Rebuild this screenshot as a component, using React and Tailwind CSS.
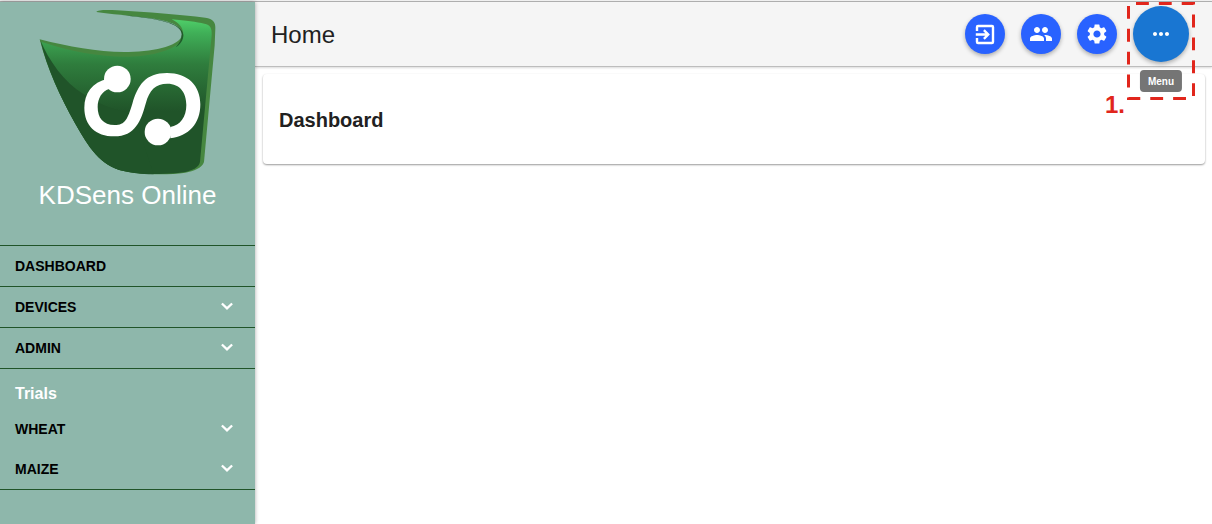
import React from 'react';
import { MdMoreHoriz, MdPeople, MdSettings } from 'react-icons/md';

const mainLinks = [
    { label: 'Dashboard', expandable: false },
    { label: 'Devices', expandable: true },
    { label: 'Admin', expandable: true },
];

const trialLinks = ['Wheat', 'Maize'];

const actions = [
    { label: 'Sign out', icon: ExitIcon },
    { label: 'Users', icon: MdPeople },
    { label: 'Settings', icon: MdSettings },
];

function ExitIcon({ className }) {
    return (
        <svg viewBox="0 0 24 24" className={className} fill="none" stroke="currentColor" strokeWidth="2.4" aria-hidden="true">
            <path d="M4 9V5a1 1 0 0 1 1-1h14a1 1 0 0 1 1 1v15a1 1 0 0 1-1 1H5a1 1 0 0 1-1-1v-4" />
            <path d="M2.8 12.5h12.4M10.9 8.2l4.3 4.3l-4.3 4.3" />
        </svg>
    );
}

function ChevronIcon({ className }) {
    return (
        <svg viewBox="0 0 24 24" className={className} fill="none" stroke="currentColor" strokeWidth="2.3" aria-hidden="true">
            <path d="M6.9 8.5L12 13.4L17.1 8.5" />
        </svg>
    );
}

function Logo() {
    return (
        <svg viewBox="53 20 540 510" className="h-[170px] w-[180px]" aria-hidden="true">
            <defs>
                <linearGradient id="leaf" x1="0" y1="50" x2="0" y2="520" gradientUnits="userSpaceOnUse">
                    <stop offset="0" stopColor="#52d46c" />
                    <stop offset="0.1" stopColor="#40b058" />
                    <stop offset="0.3" stopColor="#2f7d3d" />
                    <stop offset="0.6" stopColor="#205429" />
                    <stop offset="1" stopColor="#205429" />
                </linearGradient>
            </defs>
            {/* Rim */}
            <path
                d="M228 35C232 28 260 29 290 30C380 35 480 43 555 52C578 55 586 66 585 84L583 135L551 485C545 504 520 512 495 517C440 525 360 523 310 512C240 497 205 440 165 370C120 290 80 205 58 117C150 140 240 157 325 155C410 153 482 135 485 102C486 72 440 60 380 52C330 46 270 41 228 35Z"
                fill="#468740"
            />
            {/* Face */}
            <path
                d="M62 124C140 150 230 170 325 169C410 168 489 140 489 104C489 82 477 68 454 57C495 61 530 65 552 70C570 74 575 83 574 104L539 485C536 502 515 511 490 516C440 524 360 522 310 512C240 497 205 440 165 370C120 290 82 205 62 124Z"
                fill="url(#leaf)"
            />
            {/* Shaded edges */}
            <path
                d="M60 120C85 180 130 245 190 282C230 310 280 330 340 340L400 522C360 522 330 517 310 512C240 497 205 440 165 370C120 290 80 205 60 120Z"
                fill="#205429"
            />
            <path
                d="M300 44C380 50 489 62 489 104C489 120 480 132 466 141C478 128 484 116 484 102C484 72 420 58 360 51Z"
                fill="#1f5a2a"
            />
            {/* Sensor mark */}
            <path
                d="M262 235C215 245 192 280 192 322C192 375 225 408 282 408C345 408 362 360 376 310C388 268 405 250 441 250C480 250 498 278 498 314C498 350 480 375 450 380L450 414C505 408 540 370 540 312C540 255 502 218 440 218C375 218 352 255 336 310C322 355 315 374 283 374C248 374 232 352 232 320C232 295 245 272 266 266Z"
                fill="#fff"
            />
            <circle cx="291" cy="236" r="40" fill="#fff" />
            <circle cx="413" cy="395" r="40" fill="#fff" />
        </svg>
    );
}

function ExpandButton({ label }) {
    return (
        <button
            type="button"
            aria-expanded="false"
            className="flex h-10 w-full items-center justify-between pl-[15px] pr-4 uppercase"
        >
            {label}
            <ChevronIcon className="size-6 text-white" />
        </button>
    );
}

function Sidebar() {
    return (
        <aside className="z-10 w-[255px] shrink-0 bg-[#8eb7ab] shadow-[0_0_4px_rgba(0,0,0,0.35)]">
            <div className="flex h-[243px] flex-col items-center pt-[5px]">
                <Logo />
                <div className="text-[26px] leading-9 text-white">KDSens Online</div>
            </div>

            <nav className="border-b border-[#205429] text-sm font-bold text-black">
                {mainLinks.map((link) => (
                    <div key={link.label} className="border-t border-[#205429]">
                        {link.expandable ? (
                            <ExpandButton label={link.label} />
                        ) : (
                            <a href="#dashboard" className="flex h-10 items-center pl-[15px] uppercase">
                                {link.label}
                            </a>
                        )}
                    </div>
                ))}

                <div className="border-t border-[#205429]">
                    <h2 className="flex h-10 items-center pl-[15px] pt-2.5 text-base text-white">Trials</h2>
                    {trialLinks.map((label) => (
                        <ExpandButton key={label} label={label} />
                    ))}
                </div>
            </nav>
        </aside>
    );
}

function MenuButton() {
    return (
        <div className="relative z-20">
            <button
                type="button"
                aria-label="Menu"
                className="flex size-14 items-center justify-center rounded-full bg-[#1976d2] text-white shadow-[0_2px_4px_rgba(0,0,0,0.3)]"
            >
                <MdMoreHoriz className="size-6" />
            </button>
            <div
                role="tooltip"
                className="absolute left-1/2 top-full mt-2 -translate-x-1/2 rounded bg-[#757575] px-2 pt-[5px] pb-[3px] text-[10px] leading-[14px] font-bold text-white"
            >
                Menu
            </div>

            {/* Step marker */}
            <svg viewBox="0 0 68 98" className="pointer-events-none absolute -left-1.5 -top-1 h-[98px] w-[68px] max-w-none" aria-hidden="true">
                <path
                    d="M9 1.5H66.5V96.5H1.5V1.5H9"
                    fill="none"
                    stroke="#e1261c"
                    strokeWidth="3"
                    strokeDasharray="12.86 10"
                />
            </svg>
            <span className="absolute -left-7 top-[85px] text-2xl leading-7 font-bold text-[#e1261c]">1.</span>
        </div>
    );
}

export default function App() {
    return (
        <div className="flex min-h-screen flex-col bg-white font-['Liberation_Sans',Arial,sans-serif] text-[#212121]">
            <div className="h-0.5 shrink-0 border-b border-[#b0b0b0] bg-[#f0f0f0]" />

            <div className="flex grow">
                <Sidebar />

                <div className="min-w-0 grow">
                    <header className="flex h-[65px] items-center justify-between border-b border-[#bdbdbd] bg-[#f5f5f5] pl-4 pr-[23px] shadow-[0_1px_2px_rgba(0,0,0,0.15)]">
                        <h1 className="pt-0.5 text-2xl">Home</h1>
                        <div className="flex items-center gap-4">
                            {actions.map(({ label, icon: Icon }) => (
                                <button
                                    key={label}
                                    type="button"
                                    aria-label={label}
                                    className="flex size-10 items-center justify-center rounded-full bg-[#2962ff] text-white shadow-[0_2px_4px_rgba(0,0,0,0.3)]"
                                >
                                    <Icon className="size-6" />
                                </button>
                            ))}
                            <MenuButton />
                        </div>
                    </header>

                    <main className="py-[7px] pl-2 pr-[7px]">
                        <section className="rounded-sm bg-white px-4 pt-8 pb-[30px] shadow-[0_1px_2px_rgba(0,0,0,0.4)]">
                            <h2 className="text-xl leading-7 font-bold">Dashboard</h2>
                        </section>
                    </main>
                </div>
            </div>
        </div>
    );
}
